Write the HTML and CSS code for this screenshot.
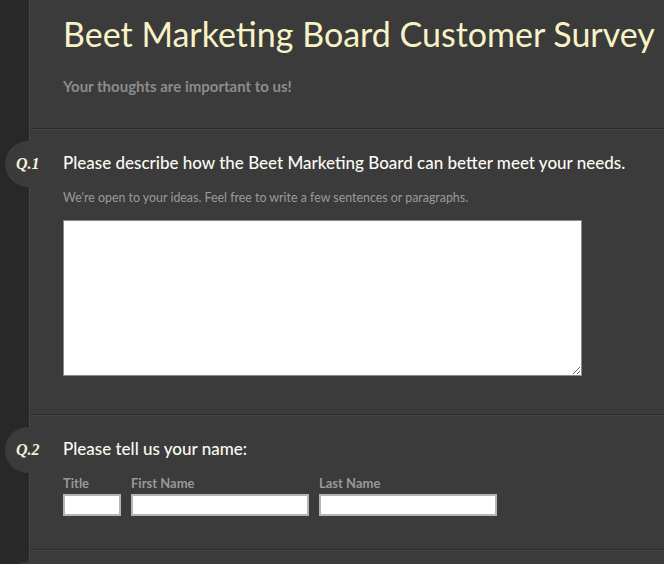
FILE: index.html
```html
<!DOCTYPE html>
<html lang="en">
<head>
  <meta charset="UTF-8" />
  <meta name="viewport" content="width=device-width, initial-scale=1.0" />
  <title>Beet Marketing Board Customer Survey</title>
  <link rel="stylesheet" href="styles.css">
</head>
<body>
  <div class="survey">
    <div class="header">
      <h1>Beet Marketing Board Customer Survey</h1>
      <p class="tagline">Your thoughts are important to us!</p>
    </div>

    <div class="question">
      <span class="q-tab">Q.1</span>
      <h2>Please describe how the Beet Marketing Board can better meet your needs.</h2>
      <p class="hint">We're open to your ideas. Feel free to write a few sentences or paragraphs.</p>
      <textarea class="answer"></textarea>
    </div>

    <div class="question">
      <span class="q-tab">Q.2</span>
      <h2>Please tell us your name:</h2>
      <div class="name-row">
        <label class="field">
          <span>Title</span>
          <input type="text" class="title-input">
        </label>
        <label class="field">
          <span>First Name</span>
          <input type="text" class="name-input">
        </label>
        <label class="field">
          <span>Last Name</span>
          <input type="text" class="name-input">
        </label>
      </div>
    </div>

    <div class="question">
      <span class="q-tab"></span>
    </div>
  </div>
</body>
</html>
```

FILE: styles.css
```css
* {
  box-sizing: border-box;
}

body {
  margin: 0;
  background: #282828;
  font-family: Lato, "Open Sans", sans-serif;
}

.survey {
  margin-left: 29px;
  border-left: 1px solid #474747;
  background: #3b3b3b;
  min-height: 600px;
}

.header {
  padding: 12px 0 33px 33px;
}

h1 {
  margin: 0;
  font-size: 34px;
  font-weight: normal;
  color: #f7f3c6;
  line-height: 44px;
  white-space: nowrap;
}

.tagline {
  margin: 21px 0 0;
  font-size: 15px;
  font-weight: bold;
  color: #8c8c8c;
}

.question {
  position: relative;
  border-top: 1px solid #2b2b2b;
  box-shadow: inset 0 1px 0 #464646;
  padding: 22px 0 33px 33px;
}

.q-tab {
  position: absolute;
  left: -25px;
  top: 12px;
  width: 25px;
  height: 46px;
  border-radius: 23px 0 0 23px;
  background: #3b3b3b;
  color: #f3efd8;
  font-family: "Liberation Serif", serif;
  font-style: italic;
  font-weight: bold;
  font-size: 16px;
  line-height: 46px;
  text-indent: 11px;
  white-space: nowrap;
}

h2 {
  margin: 0;
  font-size: 17px;
  font-weight: 500;
  color: #fbfbf4;
  line-height: 24px;
}

.hint {
  margin: 15px 0 15px;
  font-size: 12.4px;
  color: #9a9a9a;
}

.answer {
  display: block;
  width: 519px;
  height: 156px;
  margin-bottom: 5px;
  border: 1px solid #8a8a8a;
  background: #fff;
}

.name-row {
  display: flex;
  gap: 10px;
  margin-top: 14px;
}

.field {
  display: flex;
  flex-direction: column;
  font-size: 13px;
  font-weight: bold;
  color: #999;
}

.field span {
  line-height: 16px;
  margin-bottom: 3px;
}

.field input {
  height: 22px;
  border: 2px solid #b4b4b4;
  background: #fff;
  padding: 0 3px;
}

.title-input {
  width: 58px;
}

.name-input {
  width: 178px;
}
```
